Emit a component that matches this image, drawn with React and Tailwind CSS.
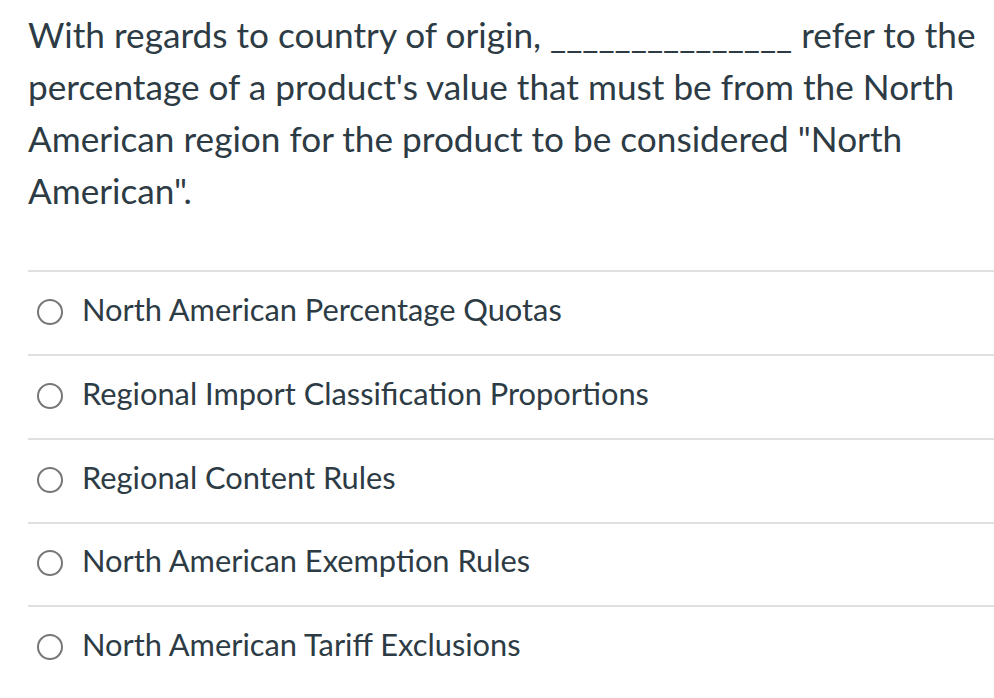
import React from "react";

const answers = [
  "North American Percentage Quotas",
  "Regional Import Classification Proportions",
  "Regional Content Rules",
  "North American Exemption Rules",
  "North American Tariff Exclusions",
];

const App = () => {
  return (
    <div className="w-[994px] h-[698px] bg-white text-[#2d3b45] font-['Lato','Liberation_Sans',sans-serif] overflow-hidden">
      <div className="pl-[28px] pr-[10px] pt-[8px]">
        <p className="text-[35.2px] leading-[52px]">
          With regards to country of origin, _______________ refer to the percentage of a product's value that must be
          from the North American region for the product to be considered "North American".
        </p>
      </div>
      <div className="ml-[28px] mt-[54px]">
        {answers.map((item, i) => (
          <div
            key={item}
            className={
              i === 3
                ? "border-t-2 border-[#e0e0e0] h-[83px] pb-[3px] flex items-center"
                : "border-t-2 border-[#e0e0e0] h-[84px] pb-[2px] flex items-center"
            }
          >
            <span className="ml-[9px] w-[26px] h-[26px] rounded-full border-2 border-[#777777] shrink-0"></span>
            <span className="ml-[19px] mb-[3px] text-[30.8px] leading-none">{item}</span>
          </div>
        ))}
      </div>
    </div>
  );
};

export default App;
